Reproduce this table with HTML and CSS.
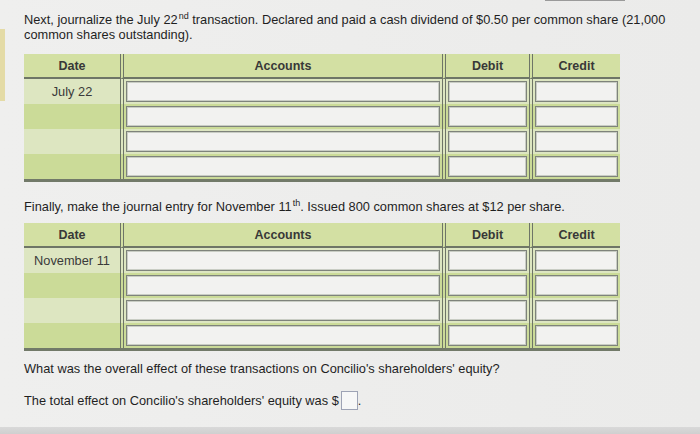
FILE: index.html
```html
<!DOCTYPE html>
<html>
<head>
<meta charset="utf-8">
<link rel="stylesheet" href="styles.css">
</head>
<body>
<div class="page">
  <p class="q q-first"><span>Next, journalize the July 22</span><sup>nd</sup><span> transaction. Declared and paid a cash dividend of $0.50 per common share (21,000</span><br><span>common shares outstanding).</span></p>
  <table class="journal j1">
    <thead>
      <tr><th class="c-date">Date</th><th class="c-acc">Accounts</th><th class="c-deb">Debit</th><th class="c-cred">Credit</th></tr>
    </thead>
    <tbody>
      <tr class="light"><td class="c-date">July 22</td><td class="c-acc"><div class="field"></div></td><td class="c-deb"><div class="field"></div></td><td class="c-cred"><div class="field"></div></td></tr>
      <tr class="dark"><td class="c-date"></td><td class="c-acc"><div class="field"></div></td><td class="c-deb"><div class="field"></div></td><td class="c-cred"><div class="field"></div></td></tr>
      <tr class="light"><td class="c-date"></td><td class="c-acc"><div class="field"></div></td><td class="c-deb"><div class="field"></div></td><td class="c-cred"><div class="field"></div></td></tr>
      <tr class="dark"><td class="c-date"></td><td class="c-acc"><div class="field"></div></td><td class="c-deb"><div class="field"></div></td><td class="c-cred"><div class="field"></div></td></tr>
    </tbody>
  </table>
  <p class="q q-second">Finally, make the journal entry for November 11<sup>th</sup>. Issued 800 common shares at $12 per share.</p>
  <table class="journal j2">
    <thead>
      <tr><th class="c-date">Date</th><th class="c-acc">Accounts</th><th class="c-deb">Debit</th><th class="c-cred">Credit</th></tr>
    </thead>
    <tbody>
      <tr class="light"><td class="c-date">November 11</td><td class="c-acc"><div class="field"></div></td><td class="c-deb"><div class="field"></div></td><td class="c-cred"><div class="field"></div></td></tr>
      <tr class="dark"><td class="c-date"></td><td class="c-acc"><div class="field"></div></td><td class="c-deb"><div class="field"></div></td><td class="c-cred"><div class="field"></div></td></tr>
      <tr class="light"><td class="c-date"></td><td class="c-acc"><div class="field"></div></td><td class="c-deb"><div class="field"></div></td><td class="c-cred"><div class="field"></div></td></tr>
      <tr class="dark"><td class="c-date"></td><td class="c-acc"><div class="field"></div></td><td class="c-deb"><div class="field"></div></td><td class="c-cred"><div class="field"></div></td></tr>
    </tbody>
  </table>
  <p class="q q-third">What was the overall effect of these transactions on Concilio's shareholders' equity?</p>
  <p class="q q-fourth">The total effect on Concilio's shareholders' equity was $<span class="box"></span>.</p>
</div>
<div class="band"></div>
</body>
</html>
```
FILE: styles.css
```css
html, body {
  margin: 0;
  padding: 0;
}
body {
  background: #ececeb;
  font-family: "Liberation Sans", Arial, sans-serif;
  font-size: 12.8px;
  color: #1f1f1f;
}
.page {
  position: relative;
  height: 427px;
  box-sizing: border-box;
  padding: 12px 0 0 24px;
  background: linear-gradient(90deg, #efefee 0%, #ebebea 100%);
}
.page::before {
  content: "";
  position: absolute;
  left: 0;
  top: 29px;
  width: 5px;
  height: 72px;
  background: #e4dba6;
}
.page::after {
  content: "";
  position: absolute;
  left: 545px;
  top: 0;
  width: 80px;
  height: 1px;
  background: #9a9a9a;
}
.q {
  margin: 0;
  line-height: 15px;
}
.q sup {
  font-size: 9px;
  line-height: 9px;
  vertical-align: 5px;
  padding-left: 1px;
}
.q-first {
  width: 660px;
}
.q-second {
  margin-top: 17px;
}
.q-third {
  margin-top: 10px;
}
.q-fourth {
  margin-top: 15px;
}
.box {
  display: inline-block;
  width: 15px;
  height: 17px;
  border: 1px solid #9ea3b5;
  background: #f7f7f7;
  vertical-align: -5px;
  margin-left: 2px;
}
.journal {
  border-collapse: separate;
  border-spacing: 0;
  table-layout: fixed;
  width: 596px;
  border-bottom: 3px solid #727a69;
}
.j1 {
  margin-top: 12px;
}
.j2 {
  margin-top: 9px;
}
.journal th {
  height: 23px;
  padding: 0;
  background: #d3e0a3;
  color: #383838;
  font-weight: bold;
  font-size: 12.5px;
  text-align: center;
  border-bottom: 2px solid #6e7666;
}
.journal td {
  height: 25px;
  padding: 0;
  text-align: center;
  color: #3a3a3a;
}
.journal tr.light td {
  background: #dde6c1;
}
.journal tr.dark td {
  background: #cbdb98;
}
.c-date {
  width: 96px;
}
.c-acc {
  width: 318px;
  border-left: 4px double #6e7567;
}
.c-deb {
  width: 83px;
  border-left: 4px double #6e7567;
}
.c-cred {
  width: 87px;
  border-left: 4px double #6e7567;
}
.field {
  height: 19px;
  margin: 0 2px;
  background: #f2f2f0;
  border: 1px solid #7e837b;
  box-shadow: inset 0 0 0 1px #c9cdc4;
}
.band {
  height: 7px;
  background: linear-gradient(180deg, #d9d9d9, #cfcfcf);
}
```
